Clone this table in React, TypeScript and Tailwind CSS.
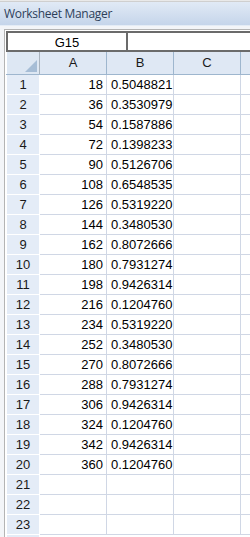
import React from 'react';

const rows: [number, string, string][] = [
  [1, '18', '0.5048821'],
  [2, '36', '0.3530979'],
  [3, '54', '0.1587886'],
  [4, '72', '0.1398233'],
  [5, '90', '0.5126706'],
  [6, '108', '0.6548535'],
  [7, '126', '0.5319220'],
  [8, '144', '0.3480530'],
  [9, '162', '0.8072666'],
  [10, '180', '0.7931274'],
  [11, '198', '0.9426314'],
  [12, '216', '0.1204760'],
  [13, '234', '0.5319220'],
  [14, '252', '0.3480530'],
  [15, '270', '0.8072666'],
  [16, '288', '0.7931274'],
  [17, '306', '0.9426314'],
  [18, '324', '0.1204760'],
  [19, '342', '0.9426314'],
  [20, '360', '0.1204760'],
  [21, '', ''],
  [22, '', ''],
  [23, '', ''],
];

const cell = 'h-[20px] shrink-0 border-r border-b border-[#d0d7e5] leading-[19px]';

const App: React.FC = () => {
  return (
    <div className="w-[250px] h-[537px] overflow-hidden bg-[#f0f0f0] flex flex-col font-['Liberation_Sans',Arial,sans-serif] text-[13px] text-black">
      {/* window top edge */}
      <div className="h-[2px] shrink-0 bg-[#e9e9e9] border-b border-[#cfcfcf]" />

      {/* title bar */}
      <div className="h-[24px] shrink-0 flex items-center pl-[4px] bg-gradient-to-b from-[#e1eaf6] to-[#c5d5ea] border-b border-[#e4ecf6]">
        <span className="font-['Open_Sans',sans-serif] text-[12px] tracking-[-0.3px] text-[#2d405a]">Worksheet Manager</span>
      </div>

      <div className="flex-1 flex flex-col pl-[4px] pt-[3px] bg-[#f3f5f8]">
        <div className="flex-1 flex flex-col border-l border-t border-[#b4b4b4] bg-white pl-[1px] pt-[1px]">
          {/* name box + formula bar */}
          <div className="h-[21px] shrink-0 flex">
            <div className="w-[122px] shrink-0 border-2 border-[#6b6b6b] flex items-center justify-center leading-none pt-[1px]">
              G15
            </div>
            <div className="flex-1 border-y-2 border-[#6b6b6b]" />
          </div>

          {/* column headers */}
          <div className="h-[23px] shrink-0 flex border-b border-[#9eb6ce]">
            <div className="w-[34px] shrink-0 border-l border-white border-r border-r-[#a9b3be] bg-[#dde7f3] flex items-end justify-end pr-[2px] pb-[2px]">
              <svg width="12" height="12" viewBox="0 0 12 12">
                <polygon points="12,0 12,12 0,12" fill="#a6bdd6" />
              </svg>
            </div>
            {['A', 'B', 'C'].map((c) => (
              <div
                key={c}
                className="w-[67px] shrink-0 border-r border-[#9eb6ce] bg-[#dfe8f4] flex items-center justify-center text-[#1a1a1a]"
              >
                {c}
              </div>
            ))}
            <div className="w-[67px] shrink-0 border-r border-[#9eb6ce] bg-[#dfe8f4]" />
          </div>

          {/* rows */}
          {rows.map(([n, a, b]) => (
            <div key={n} className="flex shrink-0">
              <div className="w-[34px] h-[20px] shrink-0 border-l border-white border-r border-b border-[#9eb6ce] bg-[#e4ecf7] text-center leading-[19px] text-[#1a1a1a]">
                {n}
              </div>
              <div className={`${cell} w-[67px] text-right pr-[3px]`}>{a}</div>
              <div className={`${cell} w-[67px] pl-[4px]`}>{b}</div>
              <div className={`${cell} w-[67px]`} />
              <div className={`${cell} w-[67px]`} />
            </div>
          ))}

          {/* next row, only its top edge shows */}
          <div className="flex shrink-0 h-[20px]">
            <div className="w-[34px] shrink-0 border-l border-white border-r border-[#9eb6ce] bg-[#e4ecf7]" />
            <div className="flex-1" />
          </div>
        </div>
      </div>
    </div>
  );
};

export default App;
